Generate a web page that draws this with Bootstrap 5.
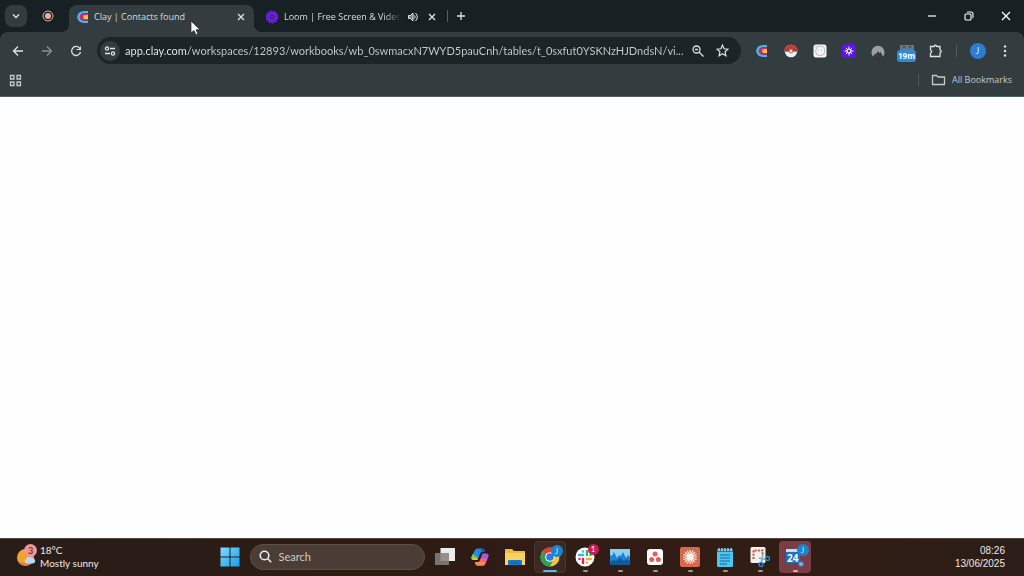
<!DOCTYPE html>
<html lang="en">
<head>
<meta charset="utf-8">
<meta name="viewport" content="width=device-width, initial-scale=1">
<title>Clay | Contacts found</title>
<link href="https://cdn.jsdelivr.net/npm/bootstrap@5.3.0/dist/css/bootstrap.min.css" rel="stylesheet">
<style>
  :root { --strip: #172123; --bar: #333d3f; --pill: #1b2527; --ink: #dfe3e3; }
  body { font-family: "Open Sans", "Noto Sans", sans-serif; font-size: 9px; line-height: 14px; background: #fefdff; color: var(--ink); }
  button { border: 0; padding: 0; background: none; color: inherit; display: flex; align-items: center; justify-content: center; flex: none; }
  svg { display: block; flex: none; }
  .line { fill: none; stroke: currentColor; stroke-width: 1.3; }
  .tabstrip { height: 32px; background: var(--strip); padding-left: 5px; }
  .tab-search { width: 22px; height: 22px; border-radius: 7px; background: #333d3f; }
  .pinned { width: 42px; height: 22px; }
  .tab { height: 27px; margin-top: 5px; width: 185px; padding: 0 6px 4px 7px; gap: 5px; }
  .tab-on { background: var(--bar); border-radius: 8px 8px 0 0; position: relative; }
  .tab-on::before, .tab-on::after { content: ""; position: absolute; bottom: 0; width: 8px; height: 8px; }
  .tab-on::before { left: -8px; background: radial-gradient(circle at 0 0, transparent 8px, var(--bar) 8px); }
  .tab-on::after { right: -8px; background: radial-gradient(circle at 100% 0, transparent 8px, var(--bar) 8px); }
  .tab-off { padding-left: 11px; padding-right: 0; }
  .tab-title { flex: 1; overflow: hidden; white-space: nowrap; color: #d9dede; }
  .fade-end { -webkit-mask-image: linear-gradient(90deg, #000 86%, transparent); mask-image: linear-gradient(90deg, #000 86%, transparent); }
  .close-btn { width: 14px; height: 14px; }
  .rule { width: 1px; height: 12px; background: #535d5f; flex: none; }
  .win-btn { width: 37px; height: 32px; color: #fff; }
  .chrome-wrap { background: var(--strip); }
  .chrome-bar { background: var(--bar); border-radius: 8px 8px 0 0; border-bottom: 1px solid #555d60; }
  .address-row { height: 37px; padding: 0 5px 0 3px; }
  .nav-btn { width: 29px; height: 27px; }
  .omnibox { height: 27px; border-radius: 14px; background: var(--pill); padding: 0 6px 0 3px; margin-left: 7px; }
  .site-info { width: 20px; height: 20px; border-radius: 50%; background: #333d3f; }
  .url { border: 0; outline: 0; padding: 0; min-width: 0; font-family: Lato, sans-serif; font-size: 11px; line-height: 18px; color: transparent; background: linear-gradient(90deg, #f2f4f4 64px, #c8cece 64px); -webkit-background-clip: text; background-clip: text; margin-left: 5px; }
  .omni-btn { width: 25px; height: 25px; }
  .ext-btn { width: 25px; height: 25px; position: relative; }
  .timer { position: absolute; left: 3px; top: 12px; width: 19px; height: 12px; border-radius: 3px; background: #2c8be0; color: #fff; font-weight: 700; font-size: 8px; line-height: 12px; text-align: center; }
  .avatar { width: 16px; height: 16px; border-radius: 50%; background: #2b7cd3; color: #d8ebff; font-family: Lato, sans-serif; font-size: 9px; }
  .bookmark-row { height: 27px; padding: 0 12px 5px 9px; }
  .bookmark-row button { color: #c3caca; }
  .folder { margin-right: 6px; }
  .taskbar { height: 38px; padding-bottom: 2px; background: linear-gradient(90deg, #281d19, #2d1c14 35%, #321d14 75%, #2b1d18); border-top: 1px solid #504640; display: grid; grid-template-columns: 1fr auto 1fr; align-items: center; color: #eee9e7; font-size: 10px; }
  .weather { padding-left: 16px; line-height: 13px; text-align: left; font-family: Lato, sans-serif; }
  .clock { padding-right: 19px; line-height: 13px; text-align: right; font-family: "Liberation Sans", sans-serif; }
  .search-box { width: 175px; height: 26px; border-radius: 13px; background: #493d36; border: 1px solid #5b5049; padding: 0 8px; gap: 7px; margin: 0 4px; }
  .search-box input { border: 0; outline: 0; background: none; padding: 0; min-width: 0; color: #ddd; font-family: Lato, sans-serif; font-size: 11px; line-height: 16px; }
  .search-box input::placeholder { color: #d2cbc7; opacity: 1; }
  .apps { gap: 3px; }
  .app { width: 32px; height: 32px; border-radius: 4px; position: relative; }
  .app-run::after { content: ""; position: absolute; bottom: 1px; left: 14px; width: 5px; height: 2px; border-radius: 1px; background: #a19690; }
  .app-on { background: #3c2a22; border: 1px solid #49372f; }
  .app-on::after { left: 8px; bottom: 0; width: 14px; background: #58b8ec; }
  .app-alert { background: #7b3d45; }
  .app-alert::after { background: #f3a3ae; }
  .dot-badge { position: absolute; top: 3px; right: 2px; width: 12px; height: 12px; border-radius: 50%; background: #1d83cf; color: #cdeaff; font-family: Lato, sans-serif; font-size: 8px; line-height: 12px; text-align: center; }
  .badge-red { background: #c81d50; color: #fff; width: 11px; height: 11px; line-height: 11px; }
  .weather-icon { position: relative; }
  .badge-pink { background: #f0949a; color: #401c1e; top: -2px; right: -1px; width: 13px; height: 13px; line-height: 13px; font-size: 9px; }
  .cal-day { font-family: "Open Sans", sans-serif; font-weight: 700; font-size: 10px; fill: #fff; }
  .pointer { position: absolute; left: 190px; top: 20px; z-index: 5; }
</style>
</head>
<body class="d-flex flex-column min-vh-100 overflow-hidden">
<svg width="0" height="0" class="position-absolute" aria-hidden="true">
  <defs>
    <g id="clay">
      <path d="M12 1H7.500L4 2 2 4 1 7l1 3 2 2 3.500 1H12z" fill="#43b8ee"/>
      <path d="M12 3H8L5 4 3.500 7 5 10l3 1h4z" fill="#6a2f9a"/>
      <path d="M12 3.500H8Q4 4 4 7t4 3.500h4z" fill="#e0245f"/>
      <path d="M12 5H9Q7 5 7 7t2 2h3z" fill="#fbc53a"/>
    </g>
    <g id="x"><path d="M3 3l6 6M9 3l-6 6" class="line"/></g>
  </defs>
</svg>
<header>
  <div class="tabstrip d-flex align-items-center">
    <button class="tab-search" aria-label="Search tabs"><svg width="10" height="10" viewBox="0 0 10 10"><path class="line" d="M2 3.500l3 3 3-3"/></svg></button>
    <button class="pinned" aria-label="Recording"><svg width="12" height="12" viewBox="0 0 12 12"><circle cx="6" cy="6" r="5" fill="none" stroke="#eeb0a6"/><circle cx="6" cy="6" r="3" fill="#f5ada2"/></svg></button>
    <div class="tab tab-on d-flex align-items-center">
      <svg width="13" height="14" viewBox="0 0 13 14"><use href="#clay"/></svg>
      <span class="tab-title">Clay | Contacts found</span>
      <button class="close-btn" aria-label="Close tab"><svg width="12" height="12"><use href="#x"/></svg></button>
    </div>
    <div class="tab tab-off d-flex align-items-center">
      <svg width="14" height="14" viewBox="0 0 14 14"><circle cx="7" cy="7" r="5.300" fill="#6a1fe0"/><circle cx="7" cy="7" r="5.600" fill="none" stroke="#6a1fe0" stroke-width="1.800" stroke-dasharray="2.400 1"/><circle cx="7" cy="7" r="2" fill="#241640"/><circle cx="7" cy="7" r=".8" fill="#a77cf5"/></svg>
      <span class="tab-title fade-end">Loom | Free Screen &amp; Video</span>
      <button class="close-btn" aria-label="Mute tab"><svg width="12" height="12" viewBox="0 0 12 12"><path d="M1.500 4.500h2L6 2v8L3.500 7.500h-2z" fill="currentColor" fill-opacity=".5" stroke="currentColor"/><path d="M7.500 4.300q1.300 1.700 0 3.400M8.500 2q3.700 4 0 8" fill="none" stroke="currentColor"/></svg></button>
      <button class="close-btn" aria-label="Close tab"><svg width="12" height="12"><use href="#x"/></svg></button>
    </div>
    <div class="rule ms-2"></div>
    <button class="omni-btn" aria-label="New tab"><svg width="10" height="10" viewBox="0 0 10 10"><path class="line" d="M5 1v8M1 5h8"/></svg></button>
    <div class="ms-auto d-flex">
      <button class="win-btn" aria-label="Minimize"><svg width="10" height="10"><path d="M1 5h8" stroke="#fff" stroke-width="1.200"/></svg></button>
      <button class="win-btn" aria-label="Restore"><svg width="10" height="10" viewBox="0 0 10 10" fill="none" stroke="#fff" stroke-width="1.100"><rect x="1" y="3" width="6" height="6" rx="1"/><path d="M3 1.500Q3.300 1 4 1h3q2 0 2 2v3q0 .7-.5 1"/></svg></button>
      <button class="win-btn" aria-label="Close"><svg width="10" height="10"><path d="M1 1l8 8M9 1L1 9" stroke="#fff" stroke-width="1.300"/></svg></button>
    </div>
  </div>
  <div class="chrome-wrap">
    <div class="chrome-bar">
      <div class="address-row d-flex align-items-center">
        <button class="nav-btn" aria-label="Back"><svg width="12" height="12" viewBox="0 0 12 12"><path class="line" d="M11 6H2M6 1.500L1.500 6 6 10.500"/></svg></button>
        <button class="nav-btn opacity-50" aria-label="Forward"><svg width="12" height="12" viewBox="0 0 12 12"><path class="line" d="M1 6h9M6 1.500L10.500 6 6 10.500"/></svg></button>
        <button class="nav-btn" aria-label="Reload"><svg width="12" height="12" viewBox="0 0 12 12"><path class="line" d="M10.500 7A4.500 4.500 0 1 1 9.500 3L10.500 4"/><path d="M11 .5V5H6.500V4H9.500z" fill="currentColor"/></svg></button>
        <div class="omnibox d-flex align-items-center flex-grow-1">
          <button class="site-info" aria-label="Site information"><svg width="12" height="12" viewBox="0 0 12 12"><g fill="none" stroke="currentColor" stroke-width="1.300"><circle cx="3" cy="3.500" r="1.600"/><path d="M6 3.500h5M1 8.500h5"/><circle cx="9" cy="8.500" r="1.600"/></g></svg></button>
          <input class="url flex-grow-1" type="text" aria-label="Address" value="app.clay.com/workspaces/12893/workbooks/wb_0swmacxN7WYD5pauCnh/tables/t_0sxfut0YSKNzHJDndsN/vi...">
          <button class="omni-btn" aria-label="Zoom"><svg width="12" height="12" viewBox="0 0 12 12"><g fill="none" stroke="currentColor" stroke-width="1.300"><circle cx="4.500" cy="4.500" r="3.500"/><path d="M7 7l4.500 4.500M3 4.500h3"/></g></svg></button>
          <button class="omni-btn" aria-label="Bookmark this page"><svg width="13" height="13" viewBox="0 0 13 13"><path d="M6.500 1.200l1.600 3.600 3.900.4-2.900 2.600.8 3.900-3.400-2-3.400 2 .8-3.900L1 5.200l3.900-.4z" fill="none" stroke="currentColor" stroke-width="1.200"/></svg></button>
        </div>
        <div class="d-flex align-items-center gap-1 ms-2">
          <button class="ext-btn" aria-label="Clay"><svg width="13" height="14" viewBox="0 0 13 14"><use href="#clay"/></svg></button>
          <button class="ext-btn" aria-label="Pokeball"><svg width="14" height="14" viewBox="0 0 14 14"><circle cx="7" cy="7" r="6.300" fill="#efefef"/><path d="M.7 7a6.300 6.300 0 0 1 12.600 0z" fill="#d83327"/><path d="M1 7h12" stroke="#5c3735"/><circle cx="7" cy="7" r="2" fill="#ddd" stroke="#666" stroke-width=".8"/></svg></button>
          <button class="ext-btn" aria-label="Assistant"><svg width="14" height="14" viewBox="0 0 14 14"><rect x=".5" y=".5" width="13" height="13" rx="2.500" fill="#f5f5f5"/><path d="M4 3q4-1.500 7 0 1.500 4 0 7.500-4 2-7.500 0Q1.500 7 4 3z" fill="none" stroke="#aaa" stroke-width=".8"/><path d="M5.500 5.500v1M8.500 5.500v1M2 3l1.500-1" stroke="#999" stroke-width=".8" fill="none"/></svg></button>
          <button class="ext-btn" aria-label="Loom"><svg width="14" height="14" viewBox="0 0 14 14"><rect width="14" height="14" rx="3" fill="#5f16dc"/><path d="M7 2.500v9M2.500 7h9M3.800 3.800l6.400 6.400M10.200 3.800l-6.400 6.400" stroke="#eee6ff" stroke-width="1"/><circle cx="7" cy="7" r="2.600" fill="#eee6ff"/><circle cx="7" cy="7" r="1.300" fill="#5f20dc"/></svg></button>
          <button class="ext-btn" aria-label="VPN"><svg width="14" height="12" viewBox="0 0 14 12"><path d="M2 11.500A6.500 6.500 0 1 1 12 11.500L9.500 7l-1 1.200L7 6 4.500 9.500 4 8.500z" fill="#9c9fa3"/></svg></button>
          <button class="ext-btn" aria-label="Timer"><svg width="14" height="14" viewBox="0 0 14 14"><path d="M0 1h14v7H0z" fill="#6d7376"/><path d="M3 3h2M9 3h2" stroke="#333"/></svg><span class="timer">19m</span></button>
          <button class="ext-btn" aria-label="Extensions"><svg width="14" height="14" viewBox="0 0 14 14"><path class="line" d="M1.500 2.500H5q1-2.500 3 0h3v3.500q2.500 1 0 3v3.500H1.500V9q2.500-1.500 0-3z"/></svg></button>
        </div>
        <div class="rule ms-2"></div>
        <button class="ext-btn ms-2" aria-label="Profile"><span class="avatar d-flex align-items-center justify-content-center">J</span></button>
        <button class="nav-btn" aria-label="Menu"><svg width="4" height="12" viewBox="0 0 4 12" fill="currentColor"><circle cx="2" cy="1.500" r="1.200"/><circle cx="2" cy="6" r="1.200"/><circle cx="2" cy="10.500" r="1.200"/></svg></button>
      </div>
      <div class="bookmark-row d-flex align-items-center">
        <button aria-label="Apps"><svg width="13" height="13" viewBox="0 0 13 13" fill="none" stroke="currentColor" stroke-width="1.300"><path d="M1.500 1.500h3.500v3.500H1.500zM8 1.500h3.500v3.500H8zM1.500 8h3.500v3.500H1.500zM8 8h3.500v3.500H8z"/></svg></button>
        <div class="rule ms-auto me-2"></div>
        <button class="ms-1"><svg class="folder" width="15" height="12" viewBox="0 0 15 12"><path d="M1.500 10.500V1.500H5.500L7 3h6.500v7.500z" fill="none" stroke="currentColor" stroke-width="1.300" stroke-linejoin="round"/></svg><span>All Bookmarks</span></button>
      </div>
    </div>
  </div>
</header>
<main class="flex-grow-1"></main>
<footer class="taskbar">
  <button class="weather justify-content-start gap-1">
    <span class="weather-icon"><svg width="20" height="21" viewBox="0 0 20 21"><circle cx="9.500" cy="11.500" r="8.500" fill="#f3a22d"/><path d="M2.500 16.500a8.500 8.500 0 0 0 13 0z" fill="#e57d32"/><path d="M10 17.500a2.500 2.500 0 0 1 0-4.500 3.600 3.600 0 0 1 6-1 2.800 2.800 0 0 1 1 5.500z" fill="#b7d9f4"/></svg><span class="dot-badge badge-pink">3</span></span>
    <span>18°C<br>Mostly sunny</span>
  </button>
  <div class="d-flex align-items-center">
    <button class="app" aria-label="Start"><svg width="20" height="20" viewBox="0 0 20 20"><defs><linearGradient id="win" x2="1" y2="1"><stop stop-color="#7bdcfb"/><stop offset="1" stop-color="#1a9cec"/></linearGradient></defs><path d="M.5.500h9v9h-9zM10.500.500h9v9h-9zM.5 10.500h9v9h-9zM10.500 10.500h9v9h-9z" fill="url(#win)"/></svg></button>
    <label class="search-box d-flex align-items-center"><svg width="13" height="13" viewBox="0 0 13 13"><circle cx="5.500" cy="5.500" r="4.300" fill="none" stroke="#eee" stroke-width="1.600"/><path d="M8.800 8.800l3.400 3.400" stroke="#eee" stroke-width="1.600"/></svg><input class="flex-grow-1" type="text" placeholder="Search" aria-label="Search"></label>
    <div class="apps d-flex">
      <button class="app" aria-label="Task view"><svg width="20" height="18" viewBox="0 0 20 18"><path d="M5.500 0H20v13H5.500z" fill="#eeeceb"/><path d="M0 5h14v12H0z" fill="#858180" fill-opacity=".85"/></svg></button>
      <button class="app" aria-label="Copilot"><svg width="18" height="18" viewBox="0 0 18 18"><path d="M4 2Q4.500.500 6.500.500H11q2 0 2.500 1.500l.5 2h-3q-1.500 0-2 1.500L6.500 12H3q-3 0-2.500-3z" fill="#2489df"/><path d="M1.500 6L7 9.500 6.500 12H3Q-.5 12 .5 9z" fill="#72cc58"/><path d="M.6 9.500l6.100 1.500-.3 1H3Q1 12 .6 9.500z" fill="#e8c63c"/><path d="M11.500 5.500H15q3 0 2.500 3L14 16q-.5 1.500-2.500 1.500H7q-2 0-2.500-1.500l-.5-2h3q1.500 0 2-1.500z" fill="#a95be0"/><path d="M9.800 10l6.700 1-2.500 5q-.5 1.500-2.500 1.500H7q-2 0-2.500-1.500l-.5-2h3q1.500 0 2-1.500z" fill="#ee5f8c"/><path d="M8.500 13.500l6.300.8-.8 1.700q-.5 1.500-2.500 1.500H7q-2 0-2.500-1.500l-.5-2h3z" fill="#f88a50"/><path d="M11 .500q2 0 2.500 1.500l.5 2h-2.500q-1.500-.5-2-3.500z" fill="#1b53b8"/></svg></button>
      <button class="app" aria-label="File Explorer"><svg width="20" height="18" viewBox="0 0 20 18"><path d="M0 1h7l2 2h11v14H0z" fill="#f0bb3a"/><path d="M0 5h20v12H0z" fill="#fbd363"/><path d="M3 17v-4q0-1 1-1h12q1 0 1 1v4z" fill="#1879c1"/><path d="M6 15h8" stroke="#125c99"/></svg></button>
      <button class="app app-run app-on" aria-label="Chrome"><svg width="20" height="20" viewBox="0 0 20 20"><circle cx="10" cy="10" r="9.500" fill="#f5c630"/><path d="M10 10L1.800 5.200A9.500 9.500 0 0 1 18.200 5.200z" fill="#dc3e30"/><path d="M10 10L1.800 5.200A9.500 9.500 0 0 0 10 19.500L14 12z" fill="#2e9e50"/><circle cx="10" cy="10" r="4.800" fill="#fff"/><circle cx="10" cy="10" r="3.800" fill="#3478df"/></svg><span class="dot-badge">J</span></button>
      <button class="app app-run" aria-label="Slack"><svg width="20" height="20" viewBox="0 0 20 20"><circle cx="10" cy="10" r="9.500" fill="#fff"/><g stroke-width="2.400" stroke-linecap="round"><path d="M4 8h4M8 4.500v.1" stroke="#36b9e8"/><path d="M12 4v4M15.500 8v.1" stroke="#2fb47c"/><path d="M12 12h4M12 15.500v.1" stroke="#e8b02e"/><path d="M8 12v4M4.500 12v.1" stroke="#dc2358"/></g></svg><span class="dot-badge badge-red">1</span></button>
      <button class="app app-run" aria-label="Monitor"><svg width="20" height="16" viewBox="0 0 20 16"><path d="M0 0h20v16H0z" fill="#2183cd"/><path d="M0 0h20v8l-2-2-2 3-3-6-2 4-2-1-2 3-3-6-2 4-2-1z" fill="#8dd0f5"/><path d="M0 13l3-2 3 1 4-3 4 3 3-2 3 2v4H0z" fill="#115b9c"/></svg></button>
      <button class="app app-run" aria-label="Asana"><svg width="16" height="16" viewBox="0 0 16 16"><rect width="16" height="16" rx="3" fill="#fff"/><g fill="#ec5a56"><circle cx="8" cy="5" r="2.500"/><circle cx="4.700" cy="10.500" r="2.500"/><circle cx="11.300" cy="10.500" r="2.500"/></g></svg></button>
      <button class="app app-run" aria-label="Claude"><svg width="20" height="20" viewBox="0 0 20 20"><rect width="20" height="20" rx="2" fill="#d4694b"/><path d="M10 3v14M3 10h14M5 5l10 10M15 5L5 15M7.300 3.500l5.400 13M12.700 3.500l-5.400 13M3.500 7.300l13 5.400M3.500 12.700l13-5.400" stroke="#fff0e8" stroke-width="1.100"/></svg></button>
      <button class="app app-run" aria-label="Notepad"><svg width="16" height="20" viewBox="0 0 16 20"><rect y="2" width="16" height="18" rx="1.500" fill="#4fc4ee"/><path d="M0 3.500h16" stroke="#217fae" stroke-width="3"/><path d="M2 1v3M5 1v3M8 1v3M11 1v3M14 1v3" stroke="#d8eef5" stroke-width="1.200"/><path d="M3 8h10M3 11h10M3 14h10M3 17h7" stroke="#176a9e" stroke-width="1.200"/></svg></button>
      <button class="app app-run" aria-label="Snipping Tool"><svg width="20" height="20" viewBox="0 0 20 20"><rect x=".5" y="0" width="15" height="16" rx="1.500" fill="#f3f1ef"/><path d="M3.500 12V3.500h9V8" fill="none" stroke="#cf5139" stroke-width="2" stroke-dasharray="2 1.200"/><path d="M13 7l-1.500 8M9 11l7 1.500" stroke="#8fa9b6" stroke-width="1.600"/><circle cx="17.500" cy="11.500" r="2" fill="none" stroke="#268acb" stroke-width="1.400"/><circle cx="11" cy="17.500" r="2" fill="none" stroke="#268acb" stroke-width="1.400"/></svg></button>
      <button class="app app-run app-alert" aria-label="Calendar"><svg width="20" height="20" viewBox="0 0 20 20"><path d="M1 2h14v14H1z" fill="#1f71c4"/><path d="M1 2h12v3H1z" fill="#c2ddf5"/><text x="2" y="15" class="cal-day">24</text><circle cx="16" cy="17" r="2.600" fill="#4794dc"/><path d="M14.500 17h3" stroke="#cfe6fa"/></svg><span class="dot-badge">J</span></button>
    </div>
  </div>
  <button class="clock justify-content-end"><span>08:26<br>13/06/2025</span></button>
</footer>
<svg class="pointer" width="11" height="17" viewBox="0 0 11 17"><path d="M1 1v12l3-2.500 2 4.500 2-1-2-4.300h4z" fill="#fff" stroke="#222" stroke-width=".7"/></svg>
<script src="https://cdn.jsdelivr.net/npm/bootstrap@5.3.0/dist/js/bootstrap.bundle.min.js"></script>
</body>
</html>
